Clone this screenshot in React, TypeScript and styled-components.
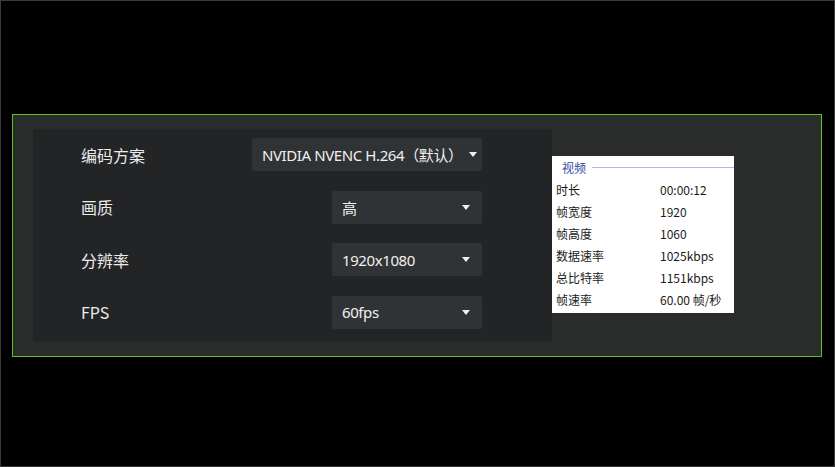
import React from 'react';
import styled, {createGlobalStyle} from 'styled-components';

const GlobalStyle = createGlobalStyle`
  html, body {
    margin: 0;
    padding: 0;
    background: #000;
  }
  * {
    box-sizing: border-box;
  }
`;

const Window = styled.div`
  width: 835px;
  height: 467px;
  border: 1px solid #3a3a3a;
  background: #000;
  display: flex;
  align-items: flex-start;
  padding: 113px 12px 0 11px;
  font-family: "Noto Sans", "Noto Sans CJK SC", sans-serif;
`;

const Frame = styled.div`
  flex: 1;
  display: flex;
  align-items: flex-start;
  background: #2a2c2b;
  border: 1px solid #5fbf1f;
  padding: 14px 20px 15px;
`;

const SettingsPanel = styled.div`
  width: 519px;
  background: #232426;
  padding: 9px 70px 12px 48px;
  display: flex;
  flex-direction: column;
  gap: 19.5px;
`;

const Row = styled.div`
  display: flex;
  align-items: center;
  justify-content: space-between;
  height: 33px;
`;

const Label = styled.span`
  font-family: "Noto Sans CJK SC", sans-serif;
  font-size: 16px;
  color: #ececec;
`;

const Select = styled.div<{ $width: number }>`
  width: ${p => p.$width}px;
  height: 33px;
  background: #303335;
  border-radius: 2px;
  display: flex;
  align-items: center;
  justify-content: space-between;
  gap: 6px;
  padding: 0 12px 0 10px;
  color: #f0f0f0;
  font-size: 15px;
  letter-spacing: -0.4px;
  font-family: "Noto Sans", "Noto Sans CJK SC", sans-serif;
  white-space: nowrap;

  svg {
    flex-shrink: 0;
  }
`;

const Caret = () => (
    <svg width="8" height="5" viewBox="0 0 8 5">
        <path d="M0 0H8L4 5Z" fill="#f0f0f0"/>
    </svg>
);

const InfoBox = styled.div`
  width: 182px;
  margin-top: 27px;
  background: #fff;
  padding: 0 0 3px 4px;
  font-family: "Noto Sans CJK SC", sans-serif;
  font-size: 12px;
  color: #1a1a1a;
`;

const Legend = styled.div`
  height: 22px;
  display: flex;
  align-items: center;
  padding-left: 6px;
  color: #3346a8;

  &::after {
    content: '';
    flex: 1;
    height: 1px;
    margin-left: 6px;
    background: #a9bce6;
  }
`;

const InfoGrid = styled.div`
  display: grid;
  grid-template-columns: 104px 1fr;
  grid-auto-rows: 22px;
  align-items: center;
`;

const settings = [
    {label: '编码方案', value: 'NVIDIA NVENC H.264（默认）', width: 230},
    {label: '画质', value: '高', width: 150},
    {label: '分辨率', value: '1920x1080', width: 150},
    {label: 'FPS', value: '60fps', width: 150},
];

const info = [
    ['时长', '00:00:12'],
    ['帧宽度', '1920'],
    ['帧高度', '1060'],
    ['数据速率', '1025kbps'],
    ['总比特率', '1151kbps'],
    ['帧速率', '60.00 帧/秒'],
];

export default function App() {
    return (
        <>
            <GlobalStyle/>
            <Window>
                <Frame>
                    <SettingsPanel>
                        {settings.map(({label, value, width}) => (
                            <Row key={label}>
                                <Label>{label}</Label>
                                <Select $width={width}>
                                    <span>{value}</span>
                                    <Caret/>
                                </Select>
                            </Row>
                        ))}
                    </SettingsPanel>
                    <InfoBox>
                        <Legend>视频</Legend>
                        <InfoGrid>
                            {info.map(([k, v]) => (
                                <React.Fragment key={k}>
                                    <span>{k}</span>
                                    <span>{v}</span>
                                </React.Fragment>
                            ))}
                        </InfoGrid>
                    </InfoBox>
                </Frame>
            </Window>
        </>
    );
}
